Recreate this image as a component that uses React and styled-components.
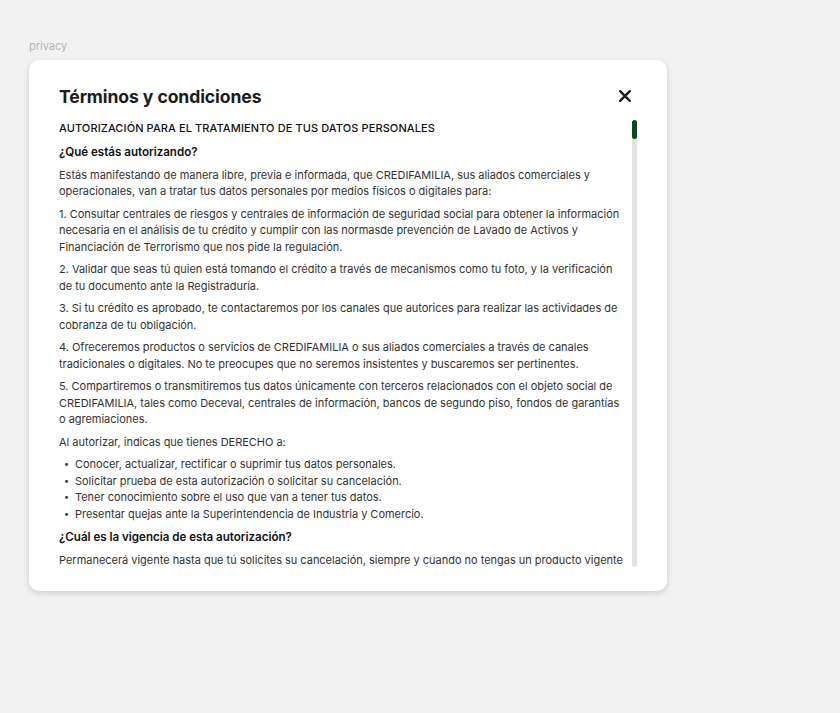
import React from "react";
import styled, { createGlobalStyle } from "styled-components";

const Global = createGlobalStyle`
  html, body { margin: 0; padding: 0; background: #f2f2f2; }
  body { font-family: "Inter", "Noto Sans", sans-serif; -webkit-font-smoothing: antialiased; }
  * { box-sizing: border-box; }
`;

const Page = styled.div`
  padding: 40px 29px;
  display: flex;
  flex-direction: column;
  align-items: flex-start;
`;

const Label = styled.div`
  font-size: 11px;
  line-height: 13px;
  color: #b3b3b3;
  margin-bottom: 7px;
`;

const Modal = styled.div`
  width: 638px;
  background: #ffffff;
  border-radius: 10px;
  box-shadow: 0 2px 6px rgba(0, 0, 0, 0.16);
  padding: 24px 30px 24px 30px;
  display: flex;
  flex-direction: column;
`;

const Header = styled.div`
  display: flex;
  align-items: center;
  justify-content: space-between;
  height: 24px;
  margin-bottom: 12px;
`;

const Title = styled.h1`
  margin: 0;
  font-size: 17.6px;
  font-weight: 700;
  color: #1c1c1c;
  letter-spacing: -0.1px;
`;

const CloseButton = styled.button`
  width: 24px;
  height: 24px;
  padding: 0;
  border: none;
  background: transparent;
  display: flex;
  align-items: center;
  justify-content: center;
  cursor: pointer;
`;

const Body = styled.div`
  display: flex;
  gap: 6px;
  height: 447px;
`;

const Scroll = styled.div`
  flex: 1;
  overflow: hidden;
  display: flex;
  flex-direction: column;
  gap: 6px;
  font-size: 11px;
  line-height: 16.5px;
  letter-spacing: -0.02px;
  color: #333333;
`;

const Track = styled.div`
  width: 5px;
  flex: none;
  background: #e2e2e2;
  border-radius: 3px;
`;

const Thumb = styled.div`
  height: 19px;
  background: #0b4a1c;
  border-radius: 3px;
`;

const SectionTitle = styled.h2`
  margin: 0;
  font-size: 11px;
  line-height: 16.5px;
  font-weight: 500;
  color: #111111;
  text-transform: uppercase;
  letter-spacing: 0.1px;
`;

const Question = styled.h3`
  margin: 0;
  font-size: 11.6px;
  line-height: 18px;
  font-weight: 600;
  color: #111111;
`;

const Para = styled.p`
  margin: 0;
`;

const List = styled.ul`
  margin: 0;
  padding: 0 0 0 5px;
  list-style: none;
`;

const Item = styled.li`
  display: flex;
  gap: 6px;
  &::before {
    content: "•";
    width: 5px;
    flex: none;
    font-size: 9px;
  }
`;

const paragraphs = [
  "1. Consultar centrales de riesgos y centrales de información de seguridad social para obtener la información necesaria en el análisis de tu crédito y cumplir con las normasde prevención de Lavado de Activos y Financiación de Terrorismo que nos pide la regulación.",
  "2. Validar que seas tú quien está tomando el crédito a través de mecanismos como tu foto, y la verificación de tu documento ante la Registraduría.",
  "3. Si tu crédito es aprobado, te contactaremos por los canales que autorices para realizar las actividades de cobranza de tu obligación.",
  "4. Ofreceremos productos o servicios de CREDIFAMILIA o sus aliados comerciales a través de canales tradicionales o digitales. No te preocupes que no seremos insistentes y buscaremos ser pertinentes.",
  "5. Compartiremos o transmitiremos tus datos únicamente con terceros relacionados con el objeto social de CREDIFAMILIA, tales como Deceval, centrales de información, bancos de segundo piso, fondos de garantías o agremiaciones.",
];

const rights = [
  "Conocer, actualizar, rectificar o suprimir tus datos personales.",
  "Solicitar prueba de esta autorización o solicitar su cancelación.",
  "Tener conocimiento sobre el uso que van a tener tus datos.",
  "Presentar quejas ante la Superintendencia de Industria y Comercio.",
];

export default function App() {
  return (
    <>
      <Global />
      <Page>
        <Label>privacy</Label>
        <Modal>
          <Header>
            <Title>Términos y condiciones</Title>
            <CloseButton aria-label="Cerrar">
              <svg width="12" height="12" viewBox="0 0 12 12" fill="none">
                <path d="M1.2 1.2 L10.8 10.8 M10.8 1.2 L1.2 10.8" stroke="#1c1c1c" strokeWidth="2.4" strokeLinecap="round" />
              </svg>
            </CloseButton>
          </Header>
          <Body>
            <Scroll>
              <SectionTitle>Autorización para el tratamiento de tus datos personales</SectionTitle>
              <Question>¿Qué estás autorizando?</Question>
              <Para>
                Estás manifestando de manera libre, previa e informada, que CREDIFAMILIA, sus aliados comerciales y operacionales, van a tratar tus datos personales por medios físicos o digitales para:
              </Para>
              {paragraphs.map((p) => (
                <Para key={p}>{p}</Para>
              ))}
              <Para>Al autorizar, indicas que tienes DERECHO a:</Para>
              <List>
                {rights.map((r) => (
                  <Item key={r}>{r}</Item>
                ))}
              </List>
              <Question>¿Cuál es la vigencia de esta autorización?</Question>
              <Para>
                Permanecerá vigente hasta que tú solicites su cancelación, siempre y cuando no tengas un producto vigente
              </Para>
            </Scroll>
            <Track>
              <Thumb />
            </Track>
          </Body>
        </Modal>
      </Page>
    </>
  );
}
